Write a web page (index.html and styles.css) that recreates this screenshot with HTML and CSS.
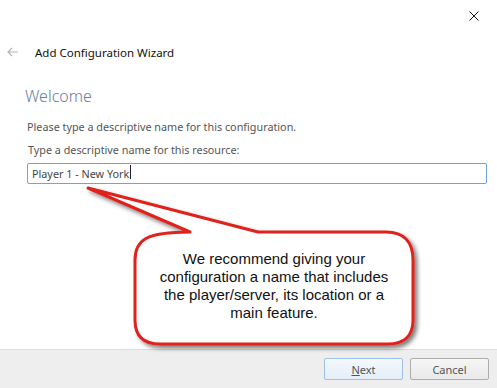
FILE: index.html
```html
<!DOCTYPE html>
<html lang="en">
<head>
    <meta charset="UTF-8">
    <title>Add Configuration Wizard</title>
    <link rel="stylesheet" href="styles.css">
</head>
<body>
<div class="window">
    <div class="titlebar">
        <button class="close-btn" aria-label="Close">
            <svg viewBox="0 0 10 10" width="10" height="10">
                <path d="M0.5 0.5 L9.5 9.5 M9.5 0.5 L0.5 9.5" stroke="#111" stroke-width="1" fill="none"/>
            </svg>
        </button>
    </div>
    <div class="header">
        <span class="back-arrow">
            <svg viewBox="0 0 12 10" width="12" height="10">
                <path d="M1 5 H11 M5 1 L1 5 L5 9" stroke="#b5b5b5" stroke-width="1.2" fill="none"/>
            </svg>
        </span>
        <span class="title">Add Configuration Wizard</span>
    </div>
    <div class="content">
        <h1>Welcome</h1>
        <p class="intro">Please type a descriptive name for this configuration.</p>
        <label for="res-name">Type a descriptive name for this resource:</label>
        <div class="field">
            <input type="text" id="res-name" value="Player 1 - New York">
            <span class="caret"></span>
        </div>
    </div>
    <div class="footer">
        <button class="btn btn-primary"><u>N</u>ext</button>
        <button class="btn">Cancel</button>
    </div>

    <!-- callout note drawn over the dialog -->
    <div class="callout">
        <svg width="345" height="180" viewBox="0 0 345 180">
            <defs>
                <filter id="shadow" x="-10%" y="-10%" width="130%" height="140%">
                    <feDropShadow dx="3" dy="3" stdDeviation="2.2" flood-color="#000" flood-opacity="0.5"/>
                </filter>
            </defs>
            <path filter="url(#shadow)" fill="#fff" stroke="#e0231c" stroke-width="3" stroke-linejoin="round"
                  d="M178 52 H306 C324 52 333 62 333 80 V140 C333 156 324 164 308 164 H80 C63 164 55 156 55 140 V80 C55 60 66 52 110 52 L8 8 Z"/>
        </svg>
        <div class="callout-text">We recommend giving your configuration a name that includes the player/server, its location or a main feature.</div>
    </div>
</div>
</body>
</html>
```

FILE: styles.css
```css
* {
    box-sizing: border-box;
    margin: 0;
    padding: 0;
}

body {
    background-color: #fff;
    font-family: 'Noto Sans', 'Open Sans', sans-serif;
    color: #222;
}

.window {
    position: relative;
    width: 497px;
    height: 388px;
    display: flex;
    flex-direction: column;
    overflow: hidden;
}

.titlebar {
    height: 30px;
    display: flex;
    justify-content: flex-end;
}

.close-btn {
    width: 46px;
    height: 30px;
    border: none;
    background: none;
    display: flex;
    align-items: center;
    justify-content: center;
    padding-top: 2px;
}

.header {
    display: flex;
    align-items: center;
    height: 44px;
    padding-left: 7px;
}

.back-arrow {
    width: 28px;
    display: flex;
}

.title {
    font-size: 11.5px;
    color: #111;
}

.content {
    padding: 12px 10px 0 25px;
}

h1 {
    font-size: 16px;
    font-weight: 300;
    color: #6b7d9e;
    line-height: 20px;
    margin-bottom: 13px;
}

.intro {
    font-size: 10.8px;
    color: #555;
    margin-left: 2px;
    margin-bottom: 8px;
}

label {
    display: block;
    font-size: 10.8px;
    color: #555;
    margin-left: 3px;
    margin-bottom: 4px;
}

.field {
    position: relative;
    margin-left: 2px;
}

input {
    width: 460px;
    height: 21px;
    border: 1px solid #6ea3e3;
    border-radius: 2px;
    padding: 0 4px;
    font-family: inherit;
    font-size: 10.8px;
    color: #444;
    outline: none;
}

.caret {
    position: absolute;
    left: 103px;
    top: 4px;
    width: 1px;
    height: 14px;
    background: #222;
}

.footer {
    margin-top: auto;
    height: 39px;
    background-color: #eeeeee;
    border-top: 1px solid #dddddd;
    display: flex;
    justify-content: flex-end;
    align-items: center;
    gap: 7px;
    padding-right: 8px;
}

.btn {
    width: 79px;
    height: 22px;
    border: 1px solid #adadad;
    border-radius: 2px;
    background: linear-gradient(#f6f6f6, #e9e9e9);
    font-family: inherit;
    font-size: 11px;
    color: #555;
}

.btn-primary {
    border-color: #9cc0e6;
    background: linear-gradient(#f4f8fc, #e4eef9);
    color: #555;
}

.callout {
    position: absolute;
    left: 80px;
    top: 180px;
    width: 345px;
    height: 180px;
}

.callout svg {
    position: absolute;
    left: 0;
    top: 0;
}

.callout-text {
    position: absolute;
    left: 55px;
    top: 52px;
    width: 278px;
    height: 112px;
    display: flex;
    align-items: center;
    justify-content: center;
    text-align: center;
    padding: 0 18px 4px;
    font-family: 'Liberation Sans', Arial, sans-serif;
    font-size: 15px;
    line-height: 18px;
    color: #111;
}
```
